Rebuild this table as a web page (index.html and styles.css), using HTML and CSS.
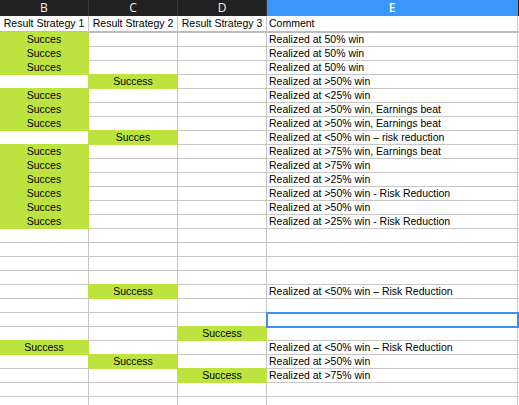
FILE: index.html
```html
<!DOCTYPE html>
<html>
<head>
<meta charset="utf-8">
<link rel="stylesheet" href="styles.css">
</head>
<body>
<div class="sheet">
  <div class="colhead">
    <div class="ch">B</div><div class="ch">C</div><div class="ch">D</div><div class="ch sel">E</div><div class="ch end"></div>
  </div>
  <div class="row titles">
    <div class="c">Result Strategy 1</div><div class="c">Result Strategy 2</div><div class="c">Result Strategy 3</div><div class="c t">Comment</div><div class="c end"></div>
  </div>
  <div class="row"><div class="c g">Succes</div><div class="c"></div><div class="c"></div><div class="c t">Realized at 50% win</div><div class="c end"></div></div>
  <div class="row"><div class="c g">Succes</div><div class="c"></div><div class="c"></div><div class="c t">Realized at 50% win</div><div class="c end"></div></div>
  <div class="row"><div class="c g">Succes</div><div class="c"></div><div class="c"></div><div class="c t">Realized at 50% win</div><div class="c end"></div></div>
  <div class="row"><div class="c"></div><div class="c g">Success</div><div class="c"></div><div class="c t">Realized at &gt;50% win</div><div class="c end"></div></div>
  <div class="row"><div class="c g">Succes</div><div class="c"></div><div class="c"></div><div class="c t">Realized at &lt;25% win</div><div class="c end"></div></div>
  <div class="row"><div class="c g">Succes</div><div class="c"></div><div class="c"></div><div class="c t">Realized at &gt;50% win, Earnings beat</div><div class="c end"></div></div>
  <div class="row"><div class="c g">Succes</div><div class="c"></div><div class="c"></div><div class="c t">Realized at &gt;50% win, Earnings beat</div><div class="c end"></div></div>
  <div class="row"><div class="c"></div><div class="c g">Succes</div><div class="c"></div><div class="c t">Realized at &lt;50% win – risk reduction</div><div class="c end"></div></div>
  <div class="row"><div class="c g">Succes</div><div class="c"></div><div class="c"></div><div class="c t">Realized at &gt;75% win, Earnings beat</div><div class="c end"></div></div>
  <div class="row"><div class="c g">Succes</div><div class="c"></div><div class="c"></div><div class="c t">Realized at &gt;75% win</div><div class="c end"></div></div>
  <div class="row"><div class="c g">Succes</div><div class="c"></div><div class="c"></div><div class="c t">Realized at &gt;25% win</div><div class="c end"></div></div>
  <div class="row"><div class="c g">Succes</div><div class="c"></div><div class="c"></div><div class="c t">Realized at &gt;50% win - Risk Reduction</div><div class="c end"></div></div>
  <div class="row"><div class="c g">Succes</div><div class="c"></div><div class="c"></div><div class="c t">Realized at &gt;50% win</div><div class="c end"></div></div>
  <div class="row"><div class="c g">Succes</div><div class="c"></div><div class="c"></div><div class="c t">Realized at &gt;25% win - Risk Reduction</div><div class="c end"></div></div>
  <div class="row"><div class="c"></div><div class="c"></div><div class="c"></div><div class="c t"></div><div class="c end"></div></div>
  <div class="row"><div class="c"></div><div class="c"></div><div class="c"></div><div class="c t"></div><div class="c end"></div></div>
  <div class="row"><div class="c"></div><div class="c"></div><div class="c"></div><div class="c t"></div><div class="c end"></div></div>
  <div class="row"><div class="c"></div><div class="c"></div><div class="c"></div><div class="c t"></div><div class="c end"></div></div>
  <div class="row"><div class="c"></div><div class="c g">Success</div><div class="c"></div><div class="c t">Realized at &lt;50% win – Risk Reduction</div><div class="c end"></div></div>
  <div class="row"><div class="c"></div><div class="c"></div><div class="c"></div><div class="c t"></div><div class="c end"></div></div>
  <div class="row"><div class="c"></div><div class="c"></div><div class="c"></div><div class="c t active"></div><div class="c end"></div></div>
  <div class="row"><div class="c"></div><div class="c"></div><div class="c g">Success</div><div class="c t"></div><div class="c end"></div></div>
  <div class="row"><div class="c g">Success</div><div class="c"></div><div class="c"></div><div class="c t">Realized at &lt;50% win – Risk Reduction</div><div class="c end"></div></div>
  <div class="row"><div class="c"></div><div class="c g">Success</div><div class="c"></div><div class="c t">Realized at &gt;50% win</div><div class="c end"></div></div>
  <div class="row"><div class="c"></div><div class="c"></div><div class="c g">Success</div><div class="c t">Realized at &gt;75% win</div><div class="c end"></div></div>
  <div class="row"><div class="c"></div><div class="c"></div><div class="c"></div><div class="c t"></div><div class="c end"></div></div>
  <div class="row"><div class="c"></div><div class="c"></div><div class="c"></div><div class="c t"></div><div class="c end"></div></div>
</div>
</body>
</html>
```

FILE: styles.css
```css
html, body {
  margin: 0;
  padding: 0;
  background: #ffffff;
}
.sheet {
  width: 519px;
  height: 405px;
  overflow: hidden;
  font-family: "Liberation Sans", Arial, sans-serif;
  font-size: 10.5px;
  color: #000;
}
.colhead {
  display: grid;
  grid-template-columns: 89px 89px 89px 251px 1fr;
  height: 16px;
  background: #212121;
}
.ch {
  box-sizing: border-box;
  border-right: 1px solid #3a3a3a;
  color: #f2f2f2;
  font-family: "Open Sans", "Noto Sans", sans-serif;
  font-size: 12px;
  line-height: 16px;
  text-align: center;
}
.ch.sel {
  background: #3a96f7;
  color: #ffffff;
  font-weight: 600;
  border-right-color: #3a96f7;
}
.ch.end {
  border-right: none;
}
.row {
  display: grid;
  grid-template-columns: 89px 89px 89px 251px 1fr;
  height: 14px;
}
.row.titles {
  height: 17px;
}
.c {
  box-sizing: border-box;
  border-right: 1px solid #c6c6c6;
  border-bottom: 1px solid #c6c6c6;
  line-height: 13px;
  text-align: center;
  white-space: nowrap;
  overflow: hidden;
}
.titles .c {
  border-bottom: 2px solid #bcbcbc;
  line-height: 15px;
}
.c.t {
  text-align: left;
  padding-left: 2px;
}
.c.end {
  border-right: none;
}
.c.g {
  background: #bde33f;
  border-right-color: #bde33f;
  border-bottom-color: #bde33f;
  box-shadow: -1px -1px 0 0 #bde33f;
}
.c.active {
  position: relative;
  z-index: 1;
  outline: 2px solid #3a8ef6;
  outline-offset: -1px;
}
```
